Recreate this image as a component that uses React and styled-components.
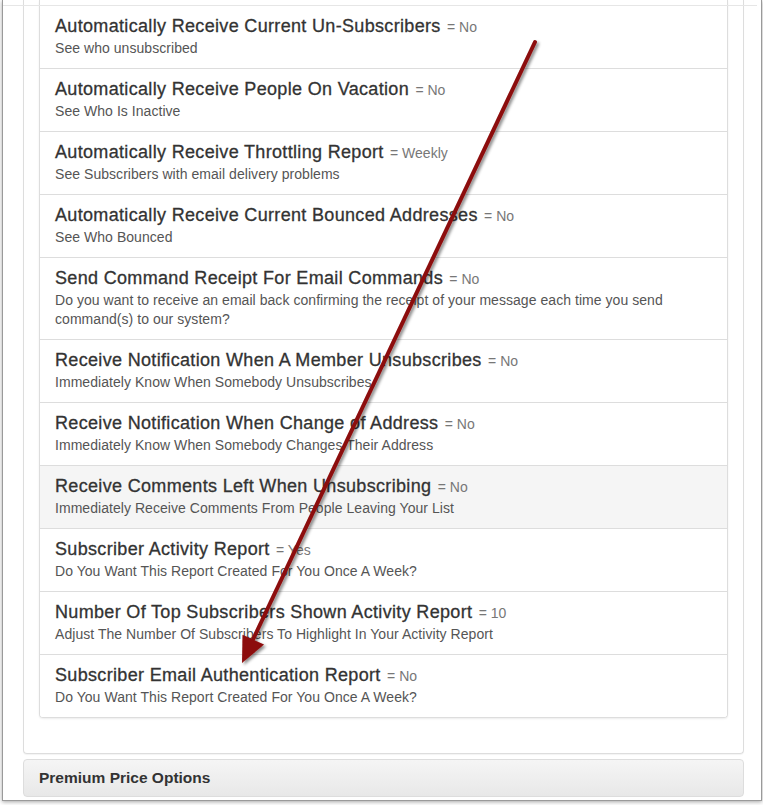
import React from "react";
import styled, { createGlobalStyle } from "styled-components";

const GlobalStyle = createGlobalStyle`
  html, body { margin: 0; padding: 0; background: #ffffff; }
  body { font-family: "Liberation Sans", Arial, sans-serif; color: #333; }
`;

const Page = styled.div`
  position: relative;
  width: 763px;
  height: 805px;
  overflow: hidden;
  background: #fff;
`;

const Frame = styled.div`
  position: relative;
  margin-left: 2px;
  width: 760px;
  box-sizing: border-box;
  border: 1px solid #9a9a9a;
  border-top: none;
  padding-bottom: 3px;
  box-shadow: 0 1px 4px rgba(0, 0, 0, 0.35);
  background: #fff;
  &::before {
    content: "";
    position: absolute;
    top: 5px;
    left: 0;
    right: 4px;
    height: 1px;
    background: #e6e6e6;
  }
`;

const OuterPanel = styled.div`
  margin-left: 20px;
  width: 721px;
  box-sizing: border-box;
  border: 1px solid #dddddd;
  border-top: none;
  border-radius: 0 0 4px 4px;
  padding: 0 15px 35px;
  box-shadow: 0 1px 1px rgba(0, 0, 0, 0.05);
`;

const ListGroup = styled.div`
  display: flex;
  flex-direction: column;
  border: 1px solid #dddddd;
  border-top: none;
  border-radius: 0 0 4px 4px;
  box-shadow: 0 1px 2px rgba(0, 0, 0, 0.075);
  overflow: hidden;
`;

const Item = styled.div`
  padding: ${(p) => (p.$first ? "16px" : "10px")} 15px 10px;
  border-bottom: ${(p) => (p.$last ? "none" : "1px solid #dddddd")};
  background: ${(p) => (p.$active ? "#f5f5f5" : "#ffffff")};
`;

const Heading = styled.div`
  font-size: 18px;
  line-height: 20px;
  height: 20px;
  color: #333333;
  margin-bottom: 3px;
  letter-spacing: 0.33px;
  -webkit-text-stroke: 0.3px #333;
  white-space: nowrap;
`;

const Value = styled.span`
  font-size: 14px;
  line-height: 1;
  color: #777777;
  letter-spacing: 0;
  -webkit-text-stroke: 0;
  margin-left: 1px;
`;

const Desc = styled.div`
  font-size: 14px;
  line-height: 19px;
  color: #555555;
  letter-spacing: 0.05px;
`;

const PremiumPanel = styled.div`
  margin: 5px 0 0 20px;
  width: 721px;
  box-sizing: border-box;
  border: 1px solid #dddddd;
  border-radius: 4px;
  padding: 9px 15px 9px;
  background: linear-gradient(to bottom, #f5f5f5 0%, #e8e8e8 100%);
  font-size: 15.5px;
  line-height: 18px;
  font-weight: 700;
  color: #333333;
`;

const ArrowLayer = styled.svg`
  position: absolute;
  left: 0;
  top: 0;
  pointer-events: none;
  overflow: visible;
`;

const items = [
  {
    title: "Automatically Receive Current Un-Subscribers",
    value: "No",
    desc: "See who unsubscribed",
  },
  {
    title: "Automatically Receive People On Vacation",
    value: "No",
    desc: "See Who Is Inactive",
  },
  {
    title: "Automatically Receive Throttling Report",
    value: "Weekly",
    desc: "See Subscribers with email delivery problems",
  },
  {
    title: "Automatically Receive Current Bounced Addresses",
    value: "No",
    desc: "See Who Bounced",
  },
  {
    title: "Send Command Receipt For Email Commands",
    value: "No",
    desc:
      "Do you want to receive an email back confirming the receipt of your message each time you send command(s) to our system?",
  },
  {
    title: "Receive Notification When A Member Unsubscribes",
    value: "No",
    desc: "Immediately Know When Somebody Unsubscribes",
  },
  {
    title: "Receive Notification When Change of Address",
    value: "No",
    desc: "Immediately Know When Somebody Changes Their Address",
  },
  {
    title: "Receive Comments Left When Unsubscribing",
    value: "No",
    desc: "Immediately Receive Comments From People Leaving Your List",
    active: true,
  },
  {
    title: "Subscriber Activity Report",
    value: "Yes",
    desc: "Do You Want This Report Created For You Once A Week?",
  },
  {
    title: "Number Of Top Subscribers Shown Activity Report",
    value: "10",
    desc: "Adjust The Number Of Subscribers To Highlight In Your Activity Report",
  },
  {
    title: "Subscriber Email Authentication Report",
    value: "No",
    desc: "Do You Want This Report Created For You Once A Week?",
  },
];

function Arrow() {
  return (
    <ArrowLayer width="763" height="805" viewBox="0 0 763 805">
      <defs>
        <filter id="shadow" x="-20%" y="-20%" width="140%" height="140%">
          <feDropShadow dx="2" dy="2" stdDeviation="1.6" floodColor="#000" floodOpacity="0.45" />
        </filter>
      </defs>
      <g filter="url(#shadow)">
        <line
          x1="535"
          y1="42"
          x2="253"
          y2="639.5"
          stroke="#8c0b0b"
          strokeWidth="4"
          strokeLinecap="round"
        />
        <polygon points="264,644.6 242,663 242.5,634.8" fill="#8c0b0b" />
      </g>
    </ArrowLayer>
  );
}

export default function App() {
  return (
    <>
      <GlobalStyle />
      <Page>
        <Frame>
          <OuterPanel>
            <ListGroup>
              {items.map((it, i) => (
                <Item
                  key={i}
                  $first={i === 0}
                  $last={i === items.length - 1}
                  $active={it.active}
                >
                  <Heading>
                    {it.title} <Value>= {it.value}</Value>
                  </Heading>
                  <Desc>{it.desc}</Desc>
                </Item>
              ))}
            </ListGroup>
          </OuterPanel>
          <PremiumPanel>Premium Price Options</PremiumPanel>
        </Frame>
        <Arrow />
      </Page>
    </>
  );
}
